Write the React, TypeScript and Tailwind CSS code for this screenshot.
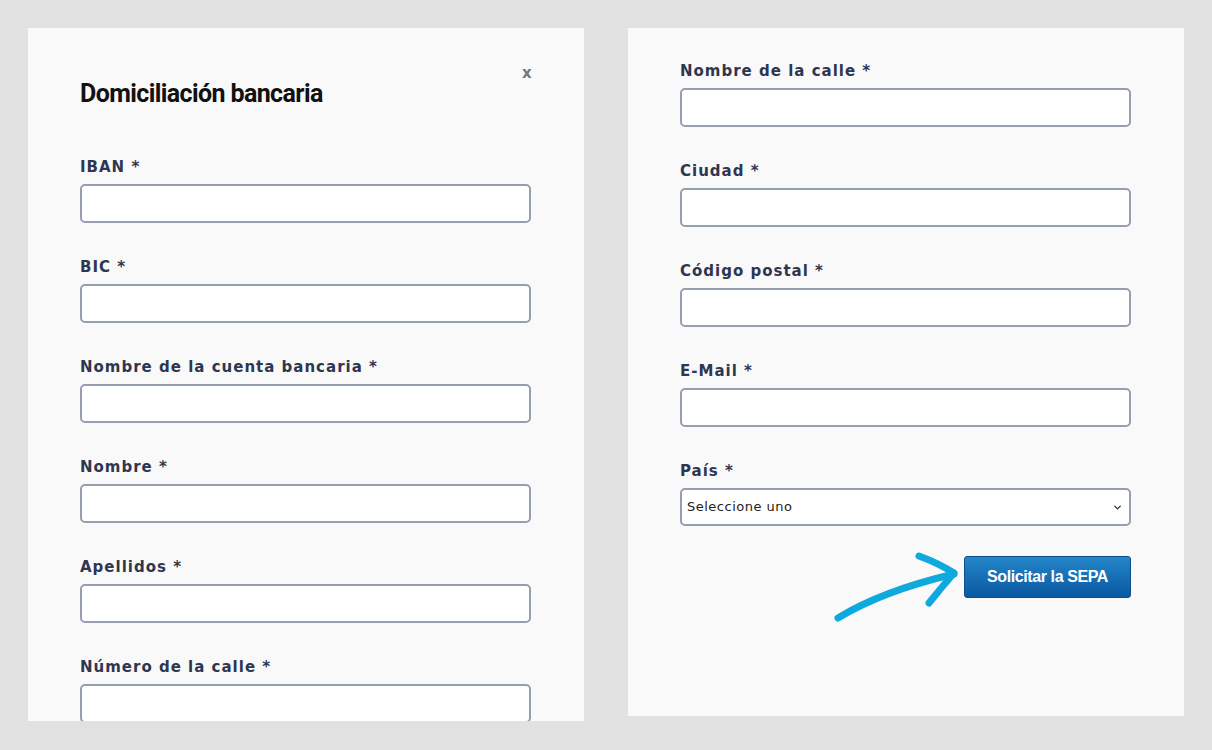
import { ChevronDown } from 'lucide-react';

const leftFields = ['IBAN', 'BIC', 'Nombre de la cuenta bancaria', 'Nombre', 'Apellidos', 'Número de la calle'];
const rightFields = ['Nombre de la calle', 'Ciudad', 'Código postal', 'E-Mail'];

const Field = ({ label }: { label: string }) => (
  <div className="flex flex-col">
    <label className="h-4 text-[15px] leading-[18px] font-bold tracking-[1px] text-[#2e3650] font-['DejaVu_Sans',sans-serif]">
      {label} *
    </label>
    <input
      type="text"
      className="mt-[10px] h-[39px] w-full rounded-[5px] border-2 border-[#969eb2] bg-white outline-none"
    />
  </div>
);

export default function App() {
  return (
    <div className="w-[1212px] h-[750px] overflow-hidden bg-[#e1e1e1] flex items-start gap-[44px] pl-[28px] pt-[28px]">
      {/* Left panel */}
      <div className="w-[556px] h-[693px] bg-[#f9f9f9] overflow-hidden pl-[52px] pr-[53px] relative">
        <button className="absolute left-[494px] top-[37px] text-[15px] leading-4 font-bold text-[#777] font-['DejaVu_Sans',sans-serif]">
          x
        </button>
        <h2 className="mt-[51px] h-[28px] leading-[30px] text-[25px] font-bold tracking-[-0.6px] text-[#111] font-['Roboto',sans-serif]">
          Domiciliación bancaria
        </h2>
        <div className="mt-[51px] flex flex-col gap-[35px]">
          {leftFields.map((f) => (
            <Field key={f} label={f} />
          ))}
        </div>
      </div>

      {/* Right panel */}
      <div className="w-[556px] h-[688px] bg-[#f9f9f9] pl-[52px] pr-[53px] pt-[34px]">
        <div className="flex flex-col gap-[35px]">
          {rightFields.map((f) => (
            <Field key={f} label={f} />
          ))}
          <div className="flex flex-col">
            <label className="h-4 text-[15px] leading-[18px] font-bold tracking-[1px] text-[#2e3650] font-['DejaVu_Sans',sans-serif]">
              País *
            </label>
            <div className="relative mt-[10px]">
              <select className="appearance-none h-[38px] w-full rounded-[5px] border-2 border-[#969eb2] bg-white pl-[5px] text-[13px] tracking-[0.5px] text-[#222] outline-none font-['DejaVu_Sans',sans-serif]">
                <option>Seleccione uno</option>
              </select>
              <ChevronDown className="absolute right-[8px] top-[14px] h-[11px] w-[11px] text-[#333] pointer-events-none" strokeWidth={3} />
            </div>
          </div>
        </div>

        <div className="relative mt-[30px] flex justify-end">
          <svg
            className="absolute left-[150px] top-[-9px]"
            width="135"
            height="80"
            viewBox="0 0 135 80"
            fill="none"
          >
            <path d="M8 71 Q52 44 124 27" stroke="#0eaade" strokeWidth="7" strokeLinecap="round" />
            <path d="M89 9 Q108 16 124 26 Q111 41 99 56" stroke="#0eaade" strokeWidth="7" strokeLinecap="round" strokeLinejoin="round" />
          </svg>
          <button className="h-[42px] w-[167px] rounded-[3px] border border-[#0b4f8c] bg-gradient-to-b from-[#2486c8] to-[#0a58a2] text-[16px] font-bold tracking-[-0.4px] text-white font-['Liberation_Sans',sans-serif]">
            Solicitar la SEPA
          </button>
        </div>
      </div>
    </div>
  );
}
